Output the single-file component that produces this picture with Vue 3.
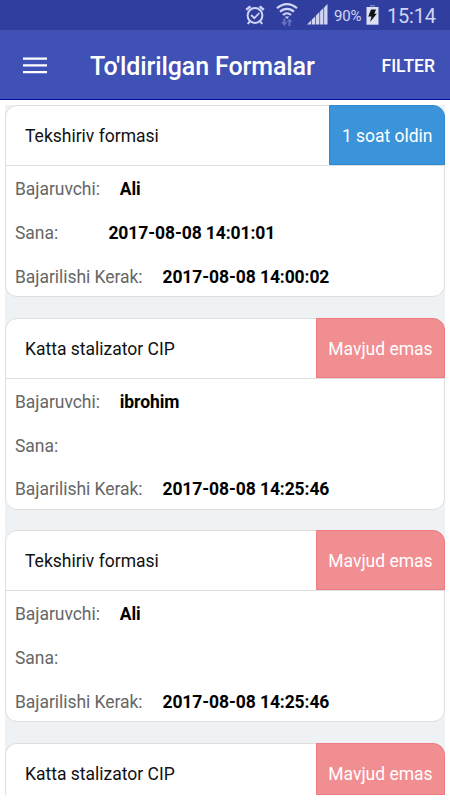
<script setup>
const forms = [
  { title: 'Tekshiriv formasi', status: '1 soat oldin', recent: true, name: 'Ali', date: '2017-08-08 14:01:01', due: '2017-08-08 14:00:02' },
  { title: 'Katta stalizator CIP', status: 'Mavjud emas', name: 'ibrohim', date: '', due: '2017-08-08 14:25:46' },
  { title: 'Tekshiriv formasi', status: 'Mavjud emas', name: 'Ali', date: '', due: '2017-08-08 14:25:46' },
  { title: 'Katta stalizator CIP', status: 'Mavjud emas', partial: true },
]
</script>

<template>
  <div class="screen">
    <div class="status-bar">
      <svg class="alarm" width="20" height="22" viewBox="0 0 20 22" fill="none" stroke="#d0d5f2">
        <circle cx="10" cy="11.5" r="7.4" stroke-width="2" />
        <path d="M1.2 5.8 5.4 2.4M18.8 5.8 14.6 2.4" stroke-width="2.4" />
        <path d="M4.8 17.3 2.8 20M15.2 17.3 17.2 20" stroke-width="2" />
        <path d="m6.1 11 3.2 3.2 5-5.2" stroke-width="1.8" />
      </svg>
      <svg class="wifi" width="22" height="24" viewBox="0 0 22 24" fill="none" stroke="#d0d5f2" stroke-width="2.2">
        <path d="M1 6.3C7 .6 15 .6 21 6.3M4 9.8c4-4 10-4 14 0M7 13c2.4-2.3 5.6-2.3 8 0" />
        <path d="M8.8 14.5h4.4L11 17z" fill="#d0d5f2" stroke="none" />
        <path d="M8.3 16.5v5.5M13.5 24v-5" stroke="#6874bf" stroke-width="2" />
        <path d="M5.3 20.3h6l-3 3.7zM10.5 19.8h6l-3-3.4z" fill="#6874bf" stroke="none" />
      </svg>
      <svg class="signal" width="21" height="21" viewBox="0 0 21 21" fill="#d0d5f2">
        <path d="M0 20.5 4 16.5v4zM4.7 15.8 8.3 12.2v8.3H4.7zM9 11.5 12.4 8v12.5H9zM13.1 7.3l3.3-3.3v16.5h-3.3zM17.1 3.4 20.5.1v20.4h-3.4z" />
      </svg>
      <span class="percent">90%</span>
      <svg class="battery" width="13" height="20" viewBox="0 0 13 20">
        <path d="M4 0h5v1.5H4z" fill="#7680c8" />
        <path d="M.5 2h12v17.7H.5z" fill="#dce0f5" />
        <path d="M5 4.5h5L8.3 8.8h2.5L4 17l1.5-5.6H2.3z" fill="#111" />
      </svg>
      <span class="clock">15:14</span>
    </div>
    <header class="app-bar">
      <svg class="burger" width="24" height="17" viewBox="0 0 24 17" fill="#fff">
        <path d="M0 .5h24v2.2H0zM0 7.3h24v2.2H0zM0 14.1h24v2.2H0z" />
      </svg>
      <h1>To'ldirilgan Formalar</h1>
      <span class="filter">FILTER</span>
    </header>
    <main class="list">
      <article v-for="(form, i) in forms" :key="i" class="card" :class="{ partial: form.partial }">
        <div class="card-head">
          <h2>{{ form.title }}</h2>
          <span class="tag" :class="{ recent: form.recent }">{{ form.status }}</span>
        </div>
        <div v-if="!form.partial" class="card-body">
          <div class="row"><span class="label">Bajaruvchi:</span><b>{{ form.name }}</b></div>
          <div class="row"><span class="label sana">Sana:</span><b>{{ form.date }}</b></div>
          <div class="row"><span class="label">Bajarilishi Kerak:</span><b>{{ form.due }}</b></div>
        </div>
      </article>
    </main>
  </div>
</template>

<style>
body { background: #fff; overflow: hidden; }
</style>

<style scoped>
* { box-sizing: border-box; }
.screen { width: 450px; height: 795px; overflow: hidden; display: flex; flex-direction: column; font-family: Roboto, sans-serif; background: #fff; }
.status-bar { flex: none; height: 30px; background: #303f9f; display: flex; align-items: flex-start; color: #d0d5f2; padding-left: 245px; white-space: nowrap; }
.alarm { margin-top: 4px; flex: none; }
.wifi { margin: 2px 0 0 11px; flex: none; }
.signal { margin: 4px 0 0 9px; flex: none; }
.percent { width: 28px; margin: 7px 0 0 6px; font-size: 15px; line-height: 19px; letter-spacing: -.2px; }
.battery { margin: 5px 0 0 4px; flex: none; }
.clock { margin: 4px 0 0 8px; font-size: 20px; line-height: 25px; letter-spacing: -.2px; }
.app-bar { flex: none; height: 70px; background: #3f51b5; border-bottom: 1px solid #000a9c; display: flex; align-items: center; padding: 2px 15px 0 23px; color: #fff; }
.burger { flex: none; margin-top: -1px; }
h1 { margin: 2px 0 0 43px; font-size: 25px; font-weight: 500; line-height: 30px; letter-spacing: -.12px; white-space: nowrap; }
.filter { margin-left: auto; font-size: 17.5px; font-weight: 500; }
.list { flex: 1; min-height: 0; margin: 5px 5px 0; background: #eef2f5; overflow: hidden; display: flex; flex-direction: column; gap: 20.5px; }
.card { flex: none; height: 192px; border: 1px solid #dedede; border-radius: 12px; background: #fff; }
.card-head { height: 60px; border-bottom: 1px solid #dedede; display: flex; justify-content: space-between; }
h2 { margin: 0; padding-left: 19px; font-size: 17.5px; font-weight: 400; line-height: 60px; color: #111; }
.tag { margin: -1px -1px 0 0; padding: 1px 11.5px 0 11.5px; height: 60px; border: 1px solid #ed7b81; border-radius: 0 12px 0 0; background: #f18e92; color: #fff; font-size: 17.5px; line-height: 58.4px; letter-spacing: -.02px; }
.tag.recent { background: #3b94d9; border-color: #2f8bcf; }
.card.partial { height: 52px; border-bottom: 0; border-radius: 12px 12px 0 0; }
.partial .card-head { height: 51px; border-bottom: 0; }
.partial .tag { height: 52px; }
.card-body { padding: 1.6px 9px 0; }
.row { height: 43.7px; display: flex; align-items: center; font-size: 17.5px; white-space: nowrap; }
.label { color: #666; margin-right: 20px; letter-spacing: -.05px; }
.label.sana { margin-right: 50.3px; }
b { font-weight: 700; color: #000; letter-spacing: -.09px; }
</style>
